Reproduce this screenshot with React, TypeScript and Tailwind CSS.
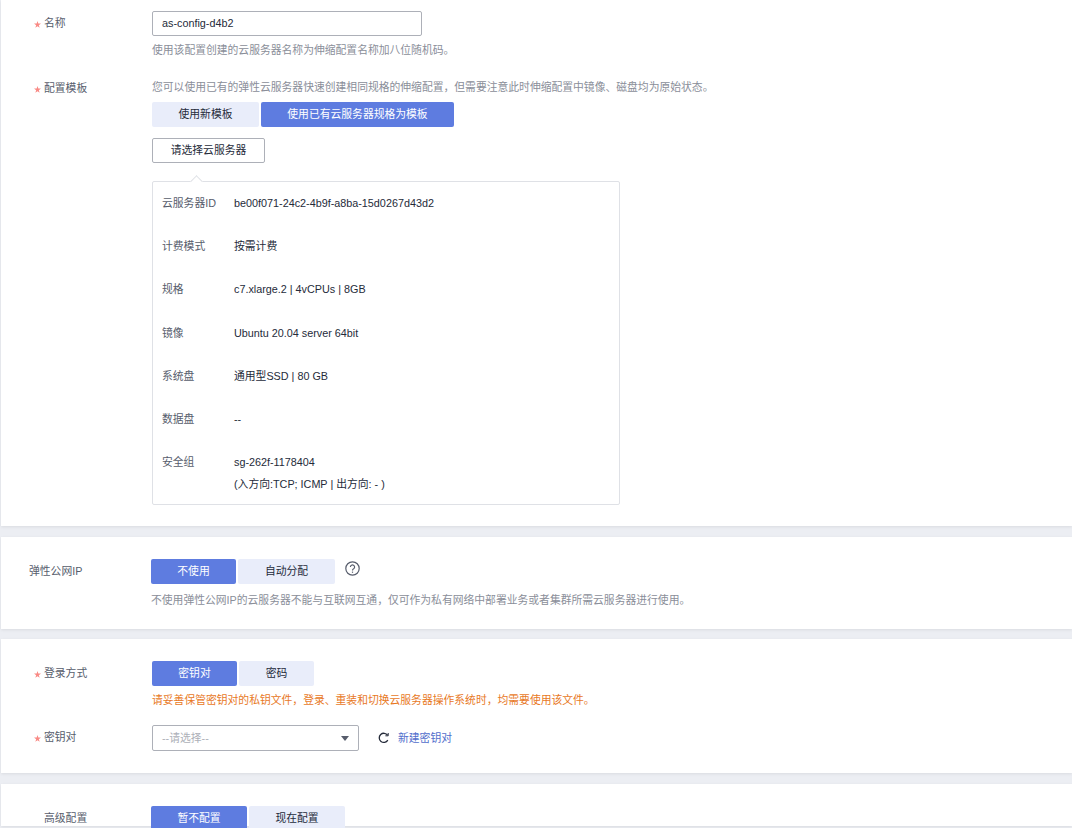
const FONT = "font-['Liberation_Sans','Noto_Sans_CJK_SC',sans-serif]";

function Label({ text, required }: { text: string; required?: boolean }) {
  return (
    <div className="w-[151px] shrink-0 flex h-[25px] items-center text-[10.8px] text-[#575d6c]">
      {required ? (
        <span className="w-[43px] pl-[33px] pt-[2px]">
          <svg width="7" height="7" viewBox="0 0 10 10">
            <path d="M5 0l1.2 3.6H10L6.9 5.9 8.1 9.6 5 7.4 1.9 9.6 3.1 5.9 0 3.6h3.8z" fill="#f98a85" />
          </svg>
        </span>
      ) : null}
      <span>{text}</span>
    </div>
  );
}

function Tabs({ items, active }: { items: { text: string; w: string }[]; active: number }) {
  return (
    <div className="flex gap-[2px]">
      {items.map((t, i) => (
        <div
          key={t.text}
          className={`h-[25px] flex items-center justify-center text-[10.8px] rounded-[2px] ${t.w} ${
            i === active ? 'bg-[#5e7ce0] text-white' : 'bg-[#e9edfa] text-[#252b3a]'
          }`}
        >
          {t.text}
        </div>
      ))}
    </div>
  );
}

const specs = [
  { k: '云服务器ID', v: 'be00f071-24c2-4b9f-a8ba-15d0267d43d2' },
  { k: '计费模式', v: '按需计费' },
  { k: '规格', v: 'c7.xlarge.2 | 4vCPUs | 8GB' },
  { k: '镜像', v: 'Ubuntu 20.04 server 64bit' },
  { k: '系统盘', v: '通用型SSD | 80 GB' },
  { k: '数据盘', v: '--' },
];

export default function App() {
  return (
    <div className={`${FONT} bg-[#eceef3] h-[828px] overflow-hidden pl-px flex flex-col`}>
      {/* 基础配置 */}
      <section className="bg-white h-[526px] shrink-0 shadow-[0_1px_3px_rgba(0,0,0,0.08)] pt-[11px]">
        <div className="flex">
          <Label text="名称" required />
          <div>
            <div className="w-[270px] h-[25px] border border-[#adb0b8] rounded-[2px] flex items-center px-[9px] text-[10.8px] text-[#252b3a]">
              as-config-d4b2
            </div>
            <p className="mt-[6px] text-[10.8px] leading-[16px] text-[#8a8e99]">使用该配置创建的云服务器名称为伸缩配置名称加八位随机码。</p>
          </div>
        </div>

        <div className="flex mt-[18px]">
          <Label text="配置模板" required />
          <div>
            <p className="text-[10.8px] leading-[16px] h-[26px] pt-[3px] text-[#8a8e99]">
              您可以使用已有的弹性云服务器快速创建相同规格的伸缩配置，但需要注意此时伸缩配置中镜像、磁盘均为原始状态。
            </p>
            <Tabs
              active={1}
              items={[
                { text: '使用新模板', w: 'w-[107px]' },
                { text: '使用已有云服务器规格为模板', w: 'w-[193px]' },
              ]}
            />
            <div className="mt-[11px] w-[113px] h-[25px] border border-[#adb0b8] rounded-[2px] flex items-center justify-center text-[10.8px] text-[#252b3a]">
              请选择云服务器
            </div>
            {/* 云服务器详情 */}
            <div className="relative mt-[18px] w-[468px] h-[324px] border border-[#dfe1e6] rounded-[2px] pt-[13px] pl-[9px] text-[10.8px]">
              <div className="absolute -top-[5px] left-[39px] w-[9px] h-[9px] bg-white border-t border-l border-[#dfe1e6] rotate-45" />
              {specs.map((s) => (
                <div key={s.k} className="flex h-[43.2px]">
                  <span className="w-[72px] text-[#575d6c] leading-[16px]">{s.k}</span>
                  <span className="text-[#252b3a] leading-[16px]">{s.v}</span>
                </div>
              ))}
              <div className="flex">
                <span className="w-[72px] text-[#575d6c] leading-[16px]">安全组</span>
                <div className="text-[#252b3a] leading-[22px] -mt-[3px]">
                  <div>sg-262f-1178404</div>
                  <div>(入方向:TCP; ICMP | 出方向: - )</div>
                </div>
              </div>
            </div>
          </div>
        </div>
      </section>

      {/* 弹性公网IP */}
      <section className="bg-white mt-[11px] h-[92px] shrink-0 shadow-[0_1px_3px_rgba(0,0,0,0.08)] pt-[22px] flex">
        <div className="w-[150px] shrink-0 pl-[28px] h-[25px] flex items-center text-[10.8px] text-[#575d6c]">弹性公网IP</div>
        <div>
          <div className="flex">
            <Tabs
              active={0}
              items={[
                { text: '不使用', w: 'w-[85px]' },
                { text: '自动分配', w: 'w-[97px]' },
              ]}
            />
            <svg className="ml-[10px] mt-[2px]" width="15" height="15" viewBox="0 0 15 15" fill="none" stroke="#575d6c" strokeWidth="1.2">
              <circle cx="7.5" cy="7.5" r="6.7" />
              <path d="M5.4 6a2.1 2.1 0 1 1 3.2 1.8c-.7.4-1.1.8-1.1 1.6" />
              <path d="M7.5 10.6v1.2" />
            </svg>
          </div>
          <p className="mt-[8px] text-[10.8px] leading-[16px] text-[#8a8e99]">
            不使用弹性公网IP的云服务器不能与互联网互通，仅可作为私有网络中部署业务或者集群所需云服务器进行使用。
          </p>
        </div>
      </section>

      {/* 登录方式 */}
      <section className="bg-white mt-[10px] h-[134px] shrink-0 shadow-[0_1px_3px_rgba(0,0,0,0.08)] pt-[22px]">
        <div className="flex">
          <Label text="登录方式" required />
          <div>
            <Tabs
              active={0}
              items={[
                { text: '密钥对', w: 'w-[85px]' },
                { text: '密码', w: 'w-[75px]' },
              ]}
            />
            <p className="mt-[6px] text-[10.8px] leading-[16px] text-[#e8791f]">
              请妥善保管密钥对的私钥文件，登录、重装和切换云服务器操作系统时，均需要使用该文件。
            </p>
          </div>
        </div>
        <div className="flex mt-[17px]">
          <Label text="密钥对" required />
          <div className="flex items-center">
            <div className="w-[207px] h-[26px] border border-[#adb0b8] rounded-[2px] flex items-center justify-between pl-[9px] pr-[9px] text-[10.8px] text-[#adb0b8]">
              <span>--请选择--</span>
              {/* 下拉三角 */}
              <svg width="8" height="5" viewBox="0 0 8 5"><path d="M0 0h8L4 5z" fill="#575d6c" /></svg>
            </div>
            {/* 刷新 */}
            <svg className="ml-[19px]" width="11" height="12" viewBox="0 0 11 12" fill="none" stroke="#252b3a" strokeWidth="1.3">
              <path d="M9.6 3.2A4.6 4.6 0 1 0 9.8 8.2" />
              <path d="M10.2 1v2.8H7.4" strokeWidth="1" />
            </svg>
            <span className="ml-[9px] text-[10.8px] text-[#526ecc]">新建密钥对</span>
          </div>
        </div>
      </section>

      {/* 高级配置 */}
      <section className="bg-white mt-[11px] h-[42px] shrink-0 shadow-[0_1px_3px_rgba(0,0,0,0.08)] pt-[22px] flex">
        <div className="w-[150px] shrink-0 pl-[43px] h-[25px] flex items-center text-[10.8px] text-[#575d6c]">高级配置</div>
        <Tabs
          active={0}
          items={[
            { text: '暂不配置', w: 'w-[96px]' },
            { text: '现在配置', w: 'w-[96px]' },
          ]}
        />
      </section>
    </div>
  );
}
